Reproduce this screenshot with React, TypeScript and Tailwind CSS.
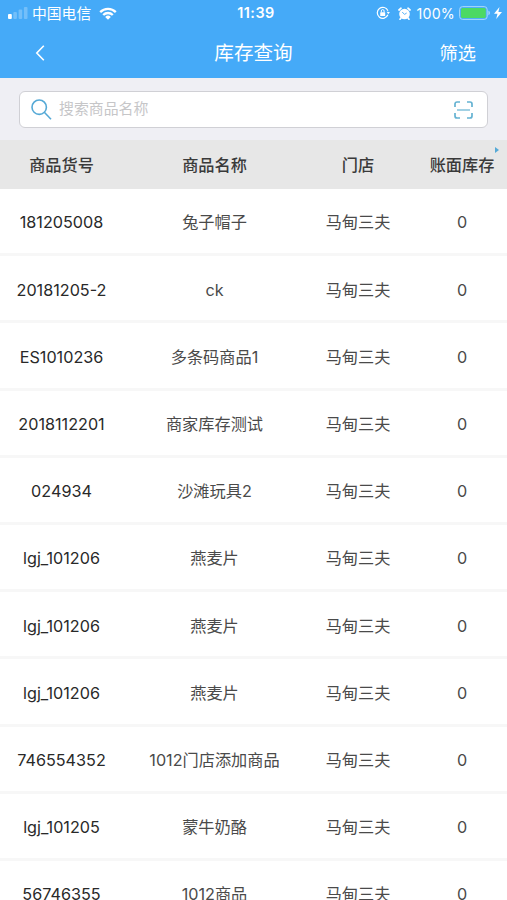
import * as React from 'react';

interface StockItem {
  code: string;
  name: string;
  store: string;
  stock: number;
}

const STORE = '马甸三夫';

const items: StockItem[] = [
  { code: '181205008', name: '兔子帽子', store: STORE, stock: 0 },
  { code: '20181205-2', name: 'ck', store: STORE, stock: 0 },
  { code: 'ES1010236', name: '多条码商品1', store: STORE, stock: 0 },
  { code: '2018112201', name: '商家库存测试', store: STORE, stock: 0 },
  { code: '024934', name: '沙滩玩具2', store: STORE, stock: 0 },
  { code: 'lgj_101206', name: '燕麦片', store: STORE, stock: 0 },
  { code: 'lgj_101206', name: '燕麦片', store: STORE, stock: 0 },
  { code: 'lgj_101206', name: '燕麦片', store: STORE, stock: 0 },
  { code: '746554352', name: '1012门店添加商品', store: STORE, stock: 0 },
  { code: 'lgj_101205', name: '蒙牛奶酪', store: STORE, stock: 0 },
  { code: '56746355', name: '1012商品', store: STORE, stock: 0 },
];

const columns = 'grid w-[514px] shrink-0 grid-cols-[123px_183px_104px_104px] items-center text-center';

function StatusBar() {
  return (
    <div className="grid h-[27px] grid-cols-[1fr_auto_1fr] items-center text-white">
      <div className="flex items-center pl-2">
        <svg width="20" height="12" viewBox="0 0 20 12" fill="currentColor">
          <rect x="0" y="7" width="3.8" height="5" rx="1" />
          <rect x="5.3" y="5" width="3.6" height="7" rx="1" opacity=".25" />
          <rect x="10.6" y="2.5" width="3.6" height="9.5" rx="1" opacity=".25" />
          <rect x="15.9" y="0" width="3.6" height="12" rx="1" opacity=".25" />
        </svg>
        <span className="ml-1 pt-px text-[14.8px] leading-none">中国电信</span>
        <svg className="ml-2" width="18" height="13" viewBox="0 0 18 13" fill="none" stroke="currentColor" strokeWidth="2.3">
          <path d="M1.2 5.1a11 11 0 0 1 15.6 0" />
          <path d="M4.2 8a6.8 6.8 0 0 1 9.6 0" />
          <path d="M9 12.7 6.2 9.9a4 4 0 0 1 5.6 0z" fill="currentColor" stroke="none" />
        </svg>
      </div>
      <span className="ml-[5px] text-[14.4px] font-semibold leading-none tracking-[0.5px]">11:39</span>
      <div className="flex items-center justify-end pr-[5px]">
        <svg width="14" height="14" viewBox="0 0 14 14" fill="none" stroke="currentColor" strokeWidth="1.2">
          <path d="M11.9 8.8A5.5 5.5 0 1 1 11.9 4.8" />
          <path d="m10.6 5.8 3.3.1-1.6 2.4z" fill="currentColor" stroke="none" />
          <rect x="4.2" y="6.2" width="5" height="3.7" rx=".5" fill="currentColor" stroke="none" />
          <path d="M5.3 6.4V5a1.4 1.4 0 0 1 2.8 0v1.4" strokeWidth="1" />
        </svg>
        <svg className="ml-2" width="13" height="13" viewBox="0 0 13 13">
          <circle cx="6.5" cy="7" r="5.3" fill="currentColor" />
          <path d="M1 3 3 1.2M10 1.2l2 1.8M3 11l-1 1.2M10 11l1 1.2" stroke="currentColor" strokeWidth="1.7" strokeLinecap="round" />
          <path d="M4.2 5 6.5 7.4 8.7 6" fill="none" stroke="#45aaf8" strokeWidth=".9" />
        </svg>
        <span className="ml-1.5 pt-px text-[14.2px] leading-none tracking-[0.2px]">100%</span>
        <svg className="ml-1" width="32" height="14" viewBox="0 0 32 14">
          <rect x=".6" y=".6" width="27.6" height="12.8" rx="3" fill="none" stroke="#a9d8fb" />
          <rect x="2" y="2" width="24.8" height="10" rx="1.6" fill="#4cd964" />
          <path d="M29.4 4.8v4.4c1-.3 1.5-1.2 1.5-2.2s-.5-1.9-1.5-2.2z" fill="#a9d8fb" />
        </svg>
        <svg className="ml-[3px]" width="8" height="12" viewBox="0 0 8 12" fill="currentColor">
          <path d="M5.5 0 0 6.8h3.5L2.2 12 8 5H4.4z" />
        </svg>
      </div>
    </div>
  );
}

function NavBar() {
  return (
    <div className="grid h-[51px] grid-cols-[1fr_auto_1fr] items-center text-white">
      <button type="button" className="ml-[35px] w-fit" aria-label="返回">
        <svg width="10" height="16" viewBox="0 0 10 16" fill="none" stroke="currentColor" strokeWidth="1.6">
          <path d="M8.8.8 1.8 8l7 7.2" />
        </svg>
      </button>
      <h1 className="pt-[3px] text-[19.6px] leading-none">库存查询</h1>
      <button type="button" className="mr-[31px] justify-self-end pt-px text-[18.2px] leading-none">
        筛选
      </button>
    </div>
  );
}

function SearchBox() {
  return (
    <div className="h-[62px] shrink-0 bg-[#efeff4] px-[19px] pt-[13px]">
      <div className="flex h-[37px] items-center rounded-[6px] border border-[#d0d0d5] bg-white pl-[11px] pr-[14px]">
        <svg width="21" height="21" viewBox="0 0 21 21" fill="none" stroke="#55a9d6" strokeWidth="1.6">
          <circle cx="8.2" cy="8.2" r="7.2" />
          <path d="m13.3 13.3 6.7 6.9" />
        </svg>
        <input
          className="ml-[7px] min-w-0 flex-1 pb-0.5 text-[14.9px] leading-none outline-none placeholder:text-[#c6c6c8]"
          placeholder="搜索商品名称"
        />
        <svg width="19" height="18" viewBox="0 0 19 18" fill="none" stroke="#64b2d2" strokeWidth="1.7">
          <path d="M1 6V3a2 2 0 0 1 2-2h3M13 1h3a2 2 0 0 1 2 2v3M18 12v3a2 2 0 0 1-2 2h-3M6 17H3a2 2 0 0 1-2-2v-3" />
          <path d="M3 9h13" strokeWidth="1.2" />
        </svg>
      </div>
    </div>
  );
}

export default function App() {
  return (
    <div className="flex h-[900px] w-[507px] flex-col overflow-hidden bg-white font-['Inter','Noto_Sans_CJK_SC',sans-serif]">
      <header className="h-[78px] shrink-0 bg-[#45aaf8]">
        <StatusBar />
        <NavBar />
      </header>
      <SearchBox />
      <div className="relative h-[49px] shrink-0 bg-[#e7e7e7]">
        <div className={`${columns} h-full pt-0.5 text-[16.2px] font-medium text-[#3a3a3a]`}>
          <span>商品货号</span>
          <span>商品名称</span>
          <span>门店</span>
          <span>账面库存</span>
        </div>
        <svg className="absolute right-2 top-[7px]" width="4" height="6" viewBox="0 0 4 6" fill="#55a9d6">
          <path d="M0 0v6l4-3z" />
        </svg>
      </div>
      <main className="flex flex-col">
        {items.map((item, index) => (
          <div
            key={index}
            className={`${columns} h-[67.2px] border-b-[3px] border-[#f7f7f7] pt-[3px] text-[16.2px] text-[#4a4a4a]`}
          >
            <span className="text-[#292929]">{item.code}</span>
            <span>{item.name}</span>
            <span>{item.store}</span>
            <span>{item.stock}</span>
          </div>
        ))}
      </main>
    </div>
  );
}
